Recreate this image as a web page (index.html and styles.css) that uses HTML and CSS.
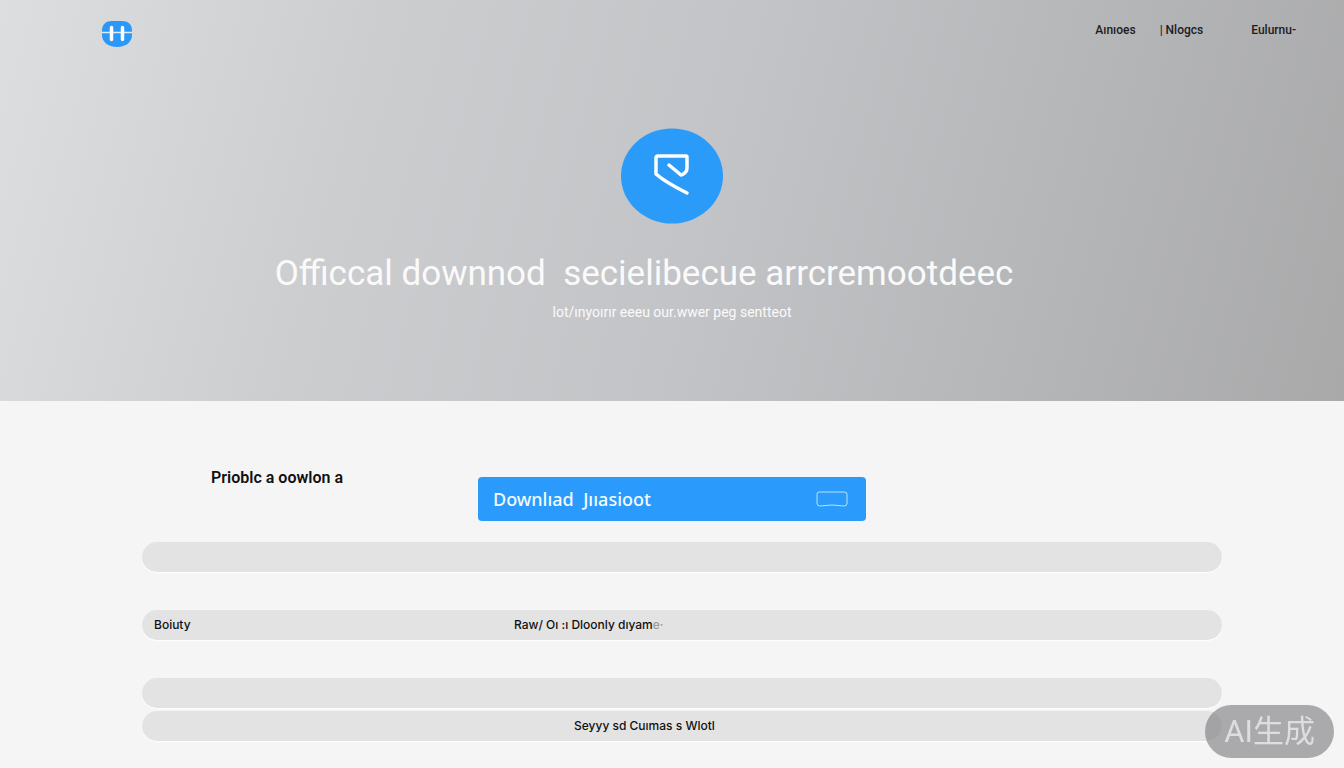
FILE: index.html
```
<!DOCTYPE html>
<html lang="en">
<head>
  <meta charset="UTF-8" />
  <meta name="viewport" content="width=device-width, initial-scale=1.0" />
  <title>Official Download</title>
  <link rel="stylesheet" href="styles.css">
</head>
<body>
  <div class="hero">
    <header class="topbar">
      <a class="logo" href="#" aria-label="Home">
        <svg width="32" height="28" viewBox="0 0 32 28">
          <path d="M11 1H21C27 1 31 4 31 11V15C31 22 25 27 16 27S1 22 1 15V11C1 4 5 1 11 1Z" fill="#2b98f8" />
          <path d="M1 12.500H31" stroke="#d9eefc" stroke-width="1.500" />
          <path d="M10.500 7.500V19.500M21.500 7.500V19.500" stroke="#fff" stroke-width="3.500" stroke-linecap="round" />
        </svg>
      </a>
      <nav class="nav">
        <a href="#">Aınıoes</a>
        <a href="#">| Nlogcs</a>
        <a class="last" href="#">Eulurnu-</a>
      </nav>
    </header>

    <svg class="badge" width="102" height="96" viewBox="0 0 102 96">
      <ellipse cx="51" cy="48" rx="51" ry="47.500" fill="#2b9bfa" />
      <path d="M48 37L60 47Q66 45 66 40V29Q66 28 65 28H37Q35 28 35 30V46Q44 54 66 65" fill="none" stroke="#fff" stroke-width="3.500" stroke-linecap="round" stroke-linejoin="round" />
    </svg>
    <h1>Officcal downnod&nbsp; secielibecue arrcremootdeec</h1>
    <p class="subtitle">lot/ınyoırır eeeu our.wwer peg sentteot</p>
  </div>

  <main>
    <div class="actions">
      <h2>Prioblc a oowlon a</h2>
      <button class="download" type="button">
        <span>Downlıad&nbsp; Jııasioot</span>
        <svg width="32" height="16" viewBox="0 0 32 16" fill="none" stroke="#b9e3ff">
          <path d="M3 1H28Q31 1 31 3V12Q31 15 28 15Q16 13 4 15Q1 15 1 12V3Q1 1 3 1Z" />
        </svg>
      </button>
    </div>

    <ul class="list">
      <li class="row"></li>
      <li class="row"><span>Boiuty</span><span>Raw/ Oı :ı Dloonly dıyam<span class="faded">e·</span></span></li>
      <li class="row"></li>
      <li class="row note">Seyyy sd Cuımas s Wlotl</li>
    </ul>
  </main>

  <div class="watermark">AI生成</div>
</body>
</html>
```
FILE: styles.css
```
* {
  box-sizing: border-box;
}
body {
  margin: 0;
  font-family: Roboto, "Liberation Sans", sans-serif;
  background: #f5f5f5;
  color: #111;
}
a {
  color: inherit;
  text-decoration: none;
}
.hero {
  display: flex;
  flex-direction: column;
  align-items: center;
  padding-bottom: 79px;
  background: linear-gradient(105deg, #dddedf 0%, #cccdcf 27%, #c3c4c7 52%, #b5b6b8 77%, #a9a9aa 100%);
  color: #fafafa;
}
.topbar {
  display: flex;
  justify-content: space-between;
  align-self: stretch;
  padding: 20px 48px 0 101px;
}
.logo svg {
  display: block;
}
.nav {
  display: flex;
  gap: 24px;
  font-size: 12px;
  font-weight: 500;
  line-height: 20px;
  color: #1c1c1e;
}
.nav .last {
  margin-left: 24px;
}
.badge {
  margin-top: 80px;
}
h1 {
  margin: 28px 0 0;
  padding-right: 56px;
  font-size: 35px;
  font-weight: 400;
  line-height: 44px;
}
.subtitle {
  margin: 6px 0 0;
  font-size: 14px;
  line-height: 20px;
}
.actions {
  display: grid;
  grid-template-columns: 1fr 388px 1fr;
  align-items: start;
  padding-top: 65px;
}
h2 {
  margin: 0;
  padding-right: 135px;
  text-align: right;
  font-size: 16px;
  font-weight: 600;
  line-height: 24px;
}
.download {
  display: flex;
  justify-content: space-between;
  align-items: center;
  height: 44px;
  margin-top: 11px;
  padding: 0 18px 0 15px;
  border: none;
  border-radius: 4px;
  background: #2a9afc;
  color: #f2faff;
  font-family: "Noto Sans", sans-serif;
  font-size: 18px;
  font-weight: 500;
  cursor: pointer;
}
.list {
  margin: 0;
  padding: 21px 122px 24px 142px;
  list-style: none;
}
.row {
  display: grid;
  grid-template-columns: 1fr 2fr;
  height: 30px;
  margin-bottom: 38px;
  border-radius: 15px;
  background: #e3e3e4;
  box-shadow: 0 1px 2px #fff;
  font-family: Inter, sans-serif;
  font-size: 12px;
  font-weight: 500;
  line-height: 30px;
}
.row > span {
  padding-left: 12px;
}
.row:nth-child(3) {
  margin-bottom: 3px;
}
.row.note {
  display: block;
  margin-bottom: 0;
  padding-left: 40%;
}
.faded {
  color: #999;
}
.watermark {
  position: fixed;
  right: 10px;
  bottom: 10px;
  padding: 0 19px;
  border-radius: 27px;
  background: rgba(120, 120, 123, 0.6);
  color: #dedede;
  font-family: Roboto, "Noto Sans CJK SC", sans-serif;
  font-size: 31px;
  line-height: 53px;
}
```
